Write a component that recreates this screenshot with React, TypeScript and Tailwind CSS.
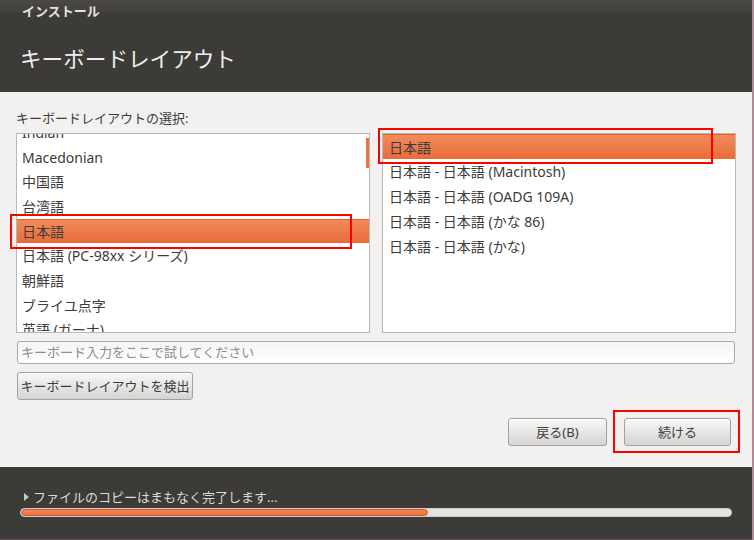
const font = { fontFamily: '"Noto Sans", "Noto Sans CJK JP", sans-serif' };

const leftItems = [
  "Indian",
  "Macedonian",
  "中国語",
  "台湾語",
  "日本語",
  "日本語 (PC-98xx シリーズ)",
  "朝鮮語",
  "ブライユ点字",
  "英語 (ガーナ)",
];

const rightItems = [
  "日本語",
  "日本語 - 日本語 (Macintosh)",
  "日本語 - 日本語 (OADG 109A)",
  "日本語 - 日本語 (かな 86)",
  "日本語 - 日本語 (かな)",
];

const selectedRow =
  "bg-[linear-gradient(to_bottom,#f38b5d,#e86b39)] border-t border-[#d9622f]";

function Button({ label, width }: { label: string; width: string }) {
  return (
    <button
      className={`${width} h-[28px] rounded-[3px] border border-[#a3a29f] bg-[linear-gradient(to_bottom,#f8f8f7,#d5d4d2)] text-[13px] text-[#3c3c3c] leading-none shadow-[inset_0_1px_0_#ffffff]`}
    >
      {label}
    </button>
  );
}

export default function App() {
  return (
    <div
      className="relative w-[754px] h-[540px] overflow-hidden flex flex-col border-r-2 border-[#b08a96]"
      style={font}
    >
      {/* header */}
      <div className="h-[92px] bg-[linear-gradient(to_bottom,#4b4945_0px,#43423e_11px,#3c3b37_13px)]">
        <div className="pl-[22px] pt-[3px] text-[13px] leading-[16px] font-bold text-[#e6e2da]">
          インストール
        </div>
        <div className="pl-[20px] mt-[26px] text-[21.6px] leading-[27px] text-[#efeeec]">
          キーボードレイアウト
        </div>
      </div>

      {/* main */}
      <div className="flex-1 bg-[#f2f1f0] px-4 flex flex-col">
        <div className="pt-[18px] text-[13px] leading-[16px] text-[#3c3c3c]">
          キーボードレイアウトの選択:
        </div>
        <div className="mt-[7px] grid grid-cols-2 gap-[12px]">
          <div className="relative h-[200px] border border-[#b9b8b5] bg-white overflow-hidden">
            <div className="-mt-[14px]">
              {leftItems.map((item) => (
                <div
                  key={item}
                  className={`h-[24.7px] flex items-center pl-[5px] text-[14px] text-[#3c3c3c] whitespace-nowrap ${
                    item === "日本語" ? selectedRow : ""
                  }`}
                >
                  {item}
                </div>
              ))}
            </div>
            <div className="absolute right-0 top-[4px] w-[3px] h-[30px] bg-[#e9743f]" />
          </div>
          <div className="h-[200px] border border-[#b9b8b5] bg-white overflow-hidden">
            {rightItems.map((item, i) => (
              <div
                key={item}
                className={`h-[25px] flex items-center pl-[6px] text-[14px] text-[#3c3c3c] whitespace-nowrap ${
                  i === 0 ? selectedRow : ""
                }`}
              >
                {item}
              </div>
            ))}
          </div>
        </div>

        <div className="mt-[8px] mx-[1px] h-[23px] rounded-[3px] border border-[#aaa9a6] bg-[linear-gradient(to_bottom,#f4f4f4,#ffffff)] flex items-center pl-[3px] text-[13px] text-[#8c8c8c]">
          キーボード入力をここで試してください
        </div>

        <div className="mt-[8px] ml-[1px]">
          <Button label="キーボードレイアウトを検出" width="w-[176px]" />
        </div>

        <div className="mt-[18px] flex justify-end gap-[17px] pr-[5px]">
          <Button label="戻る(B)" width="w-[99px]" />
          <Button label="続ける" width="w-[107px]" />
        </div>
      </div>

      {/* bottom panel */}
      <div className="h-[73px] bg-[#3c3b37] px-[20px] pt-[22px] border-b border-[#5e4f5a]">
        <div className="flex items-center text-[13px] leading-[16px] text-[#dcdad5]">
          <span className="ml-[4px] mr-[4px] w-0 h-0 border-y-[4.5px] border-y-transparent border-l-[5px] border-l-[#c9c7c2]" />
          ファイルのコピーはまもなく完了します...
        </div>
        <div className="mt-[3px] h-[9px] rounded-full bg-[#e4e3e1] border border-[#cfcecb] overflow-hidden">
          <div className="h-full w-[407px] rounded-full bg-[linear-gradient(to_bottom,#f4885a,#ec6e3c)] border border-[#c65a2c]" />
        </div>
      </div>

      {/* red annotation boxes */}
      <div className="absolute left-[10px] top-[214px] w-[342px] h-[35px] border-2 border-[#ff0000]" />
      <div className="absolute left-[378px] top-[128px] w-[335px] h-[36px] border-2 border-[#ff0000]" />
      <div className="absolute left-[613px] top-[410px] w-[127px] h-[43px] border-2 border-[#ff0000]" />
    </div>
  );
}
